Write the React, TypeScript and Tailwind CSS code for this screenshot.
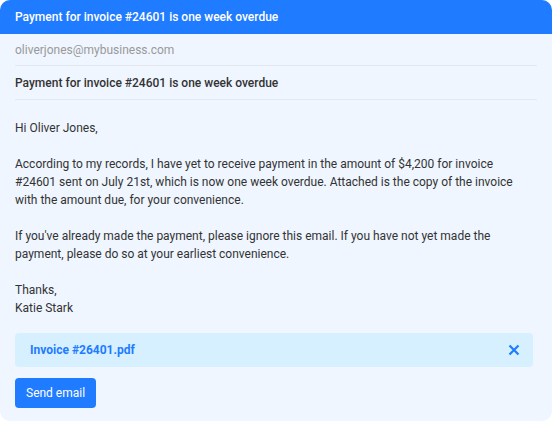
export default function App() {
  return (
    <div className="w-[552px] h-[421px] bg-white" style={{ fontFamily: "Roboto, 'Noto Sans', sans-serif" }}>
      <div className="w-[552px] h-[421px] rounded-[10px] bg-[#eff6ff] overflow-hidden flex flex-col">
        <div className="h-[34px] bg-[#1f7bff] px-[15px] flex items-center text-white text-[12px] font-medium">
          Payment for invoice #24601 is one week overdue
        </div>
        <div className="px-[15px] flex flex-col">
          <div className="h-[32px] flex items-center text-[12px] text-[#999] border-b border-[#e3e7ee]">
            oliverjones@mybusiness.com
          </div>
          <div className="h-[34px] flex items-center text-[12px] font-medium text-[#333] border-b border-[#e3e7ee]">
            Payment for invoice #24601 is one week overdue
          </div>
          <div className="pt-[19px] text-[12px] leading-[18px] text-[#333] flex flex-col gap-[18px]">
            <p>Hi Oliver Jones,</p>
            <p>
              According to my records, I have yet to receive payment in the amount of $4,200 for invoice #24601 sent on July 21st, which is now one week overdue. Attached is the copy of the invoice with the amount due, for your convenience.
            </p>
            <p>
              If you've already made the payment, please ignore this email. If you have not yet made the payment, please do so at your earliest convenience.
            </p>
            <p>
              Thanks,
              <br />
              Katie Stark
            </p>
          </div>
          <div className="mt-[16px] mr-[4px] h-[34px] rounded-[4px] bg-[#d6f0ff] flex items-center justify-between pl-[15px] pr-[13px]">
            <span className="text-[12px] font-bold text-[#1f7bff]">Invoice #26401.pdf</span>
            <svg width="12" height="12" viewBox="0 0 12 12" fill="none">
              <path d="M1.5 1.5L10.5 10.5M10.5 1.5L1.5 10.5" stroke="#1f7bff" strokeWidth="2.2" strokeLinecap="butt" />
            </svg>
          </div>
          <div className="mt-[11px]">
            <button className="h-[30px] px-[11px] rounded-[4px] bg-[#1f7bff] text-white text-[12px] font-normal">
              Send email
            </button>
          </div>
        </div>
      </div>
    </div>
  );
}
